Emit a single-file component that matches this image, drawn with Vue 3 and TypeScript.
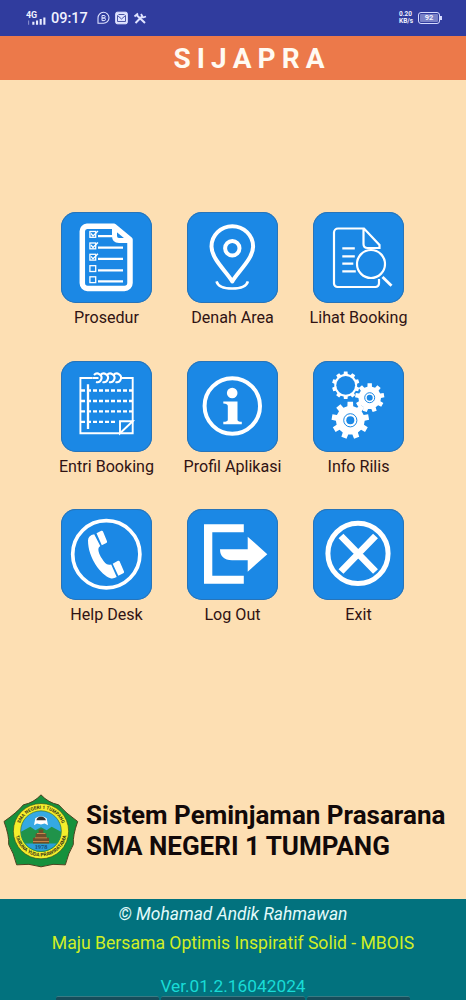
<template>
  <div class="app">
    <div class="status">
      <svg class="status__signal" viewBox="0 0 20 14">
        <text class="status__net" x="0" y="6.5">4G</text>
        <path d="M6 10h2v3H6zM9.5 9h2v4h-2zM13 7.5h2V13h-2zM16.500 6h2v7h-2z" fill="#e9ecff" />
        <path d="M2.500 9v4" stroke="#8c93d0" />
      </svg>
      <span class="status__time">09:17</span>
      <svg class="status__tray" viewBox="0 0 50 14" fill="none" stroke="#dfe3ff">
        <path d="M1 12.300V7a5.500 5.500 0 1 1 5.500 5.300z" stroke-width="1.100" />
        <path d="M5 4.500h2a1.200 1.200 0 0 1 0 2.500H5zM5 7h2.200a1.300 1.300 0 0 1 0 2.600H5z" />
        <rect x="18.700" y="1.200" width="11.600" height="11.600" rx="1.500" fill="#dfe3ff" />
        <path d="M20.500 4.500l4 3.500 4-3.500v6h-8zM21.500 3.500h6" stroke="#4d56a5" />
        <path d="M39.500 4l8.500 8M38.500 12l7-7" stroke-width="2" />
        <path d="M37.500 5.500l3.500-3M44 3l2 3.500 3-1" stroke-width="1.800" />
      </svg>
      <div class="status__speed"><b>0.20</b><b>KB/s</b></div>
      <div class="status__battery"><span>92</span></div>
    </div>

    <header class="header">S I J A P R A</header>

    <main class="main">
      <div class="menu">
        <div v-for="item in menu" :key="item.id" class="menu__item">
          <svg class="menu__icon" viewBox="0 0 91 91" fill="none" stroke="#fff">
            <g v-if="item.id === 'procedure'">
              <path d="M26 14.300H53L69 27.500V71a5.500 5.500 0 0 1-5.500 5.500H26.500A5.500 5.500 0 0 1 21.300 71V19.300a5 5 0 0 1 4.700-5z" stroke-width="5.500" stroke-linejoin="round" />
              <path d="M53.500 14v10q0 4.500 4.500 4.500h11" stroke-width="5" />
              <g v-for="(y, i) in checkRows" :key="y">
                <rect x="28.900" :y="y - 3" width="5.800" height="5.800" stroke-width="1.300" />
                <path v-if="i < 3" :d="`M30 ${y - 1}l2 2.500 5-5`" stroke-width="1.300" />
                <path :d="`M37 ${y + 1.6}H${i ? 62 : 52}`" stroke-width="2.200" />
              </g>
            </g>
            <g v-else-if="item.id === 'map'" stroke-width="4">
              <path d="M45.300 69.500C40 60 24.500 47 24.500 34.500a20.800 20.300 0 0 1 41.600 0C66.100 47 50.500 60 45.300 69.500z" stroke-linejoin="round" />
              <circle cx="45.300" cy="36.300" r="7.200" />
              <path d="M29.500 69.300q2 7.200 15.700 7.200t15.700-7.200" stroke-width="2.500" />
            </g>
            <g v-else-if="item.id === 'list'" stroke-width="2.200">
              <path d="M66 67v4.500a3.500 3.500 0 0 1-3.500 3.500h-38A3.500 3.500 0 0 1 21 71.500v-51a4 4 0 0 1 4-4h26L66.500 33v3H54.500q-4 0-4-4V17" />
              <path d="M29.300 36.300h12.500M29.300 44.300h12.500M29.300 51.700h11M29.300 59.300h13.500" />
              <circle cx="58" cy="52" r="14" />
              <path d="M69.500 65l9 8.800" stroke-width="2.800" />
            </g>
            <g v-else-if="item.id === 'entry'" stroke-width="1.900">
              <path d="M31.500 17H19.400v55.200h52.300V17H60" />
              <path d="M20 29.500h51M20 40h51M20 50.400h51M20 60.800h36" stroke-width="2.300" stroke-dasharray="4 2" />
              <path d="M27 23.300V68" stroke-width="2.300" />
              <path d="M71.700 60.200H59v12zM59 72.200l12.700-12" />
              <path v-for="x in rings" :key="x" :d="`M${x - 3.5} 14a4.300 4.300 0 1 1 2 7`" stroke-width="2.100" />
              <path d="M31.500 17h6" />
            </g>
            <g v-else-if="item.id === 'about'">
              <circle cx="45.300" cy="45" r="27.700" stroke-width="4" />
              <circle cx="45.200" cy="32" r="5.300" fill="#fff" stroke="none" />
              <path d="M36.300 40.500h14.200v18.300q0 2 4.300 2v2.500H36.300v-2.500q4.500 0 4.500-2V45q0-2.500-4.500-2.500z" fill="#fff" stroke="none" />
            </g>
            <g v-else-if="item.id === 'release'" stroke="none">
              <path v-for="(gear, i) in gears" :key="i" :d="gearPath(gear)" fill="#fff" />
              <circle cx="32.700" cy="24.300" r="9.400" fill="#1b88e5" />
              <g fill="none" stroke="#1b88e5" stroke-width="1">
                <circle cx="56.700" cy="36.700" r="5" />
                <circle cx="37.300" cy="59.300" r="6.600" />
              </g>
              <circle cx="56.700" cy="36.700" r="3" fill="#1b88e5" />
              <circle cx="37.300" cy="59.300" r="4" fill="#1b88e5" />
            </g>
            <g v-else-if="item.id === 'help'">
              <circle cx="45.300" cy="45.300" r="33.600" stroke-width="3.700" />
              <path d="M33.200 25.300Q27 26.500 27 31.500C27 49 40 66 49.500 69.300q3 .7 6.200-1.300L50.200 55.500q-4 1-6-1.500C39.500 48.500 37 43 37.400 39.800q.2-1.500 1.900-2.800z" fill="#fff" stroke="none" />
              <path d="M35.500 24.300l4.800-2.500q1.200-.5 1.700.7L46 32.300q.5 1.200-.7 1.700l-4.500 2.200zM51.700 54.800l5.300-3q1.200-.5 1.700.7l4.300 10q.5 1.200-.7 1.700l-5 2.600z" fill="#fff" stroke="none" />
            </g>
            <g v-else-if="item.id === 'logout'" fill="#fff" stroke="none">
              <path d="M17 15.300h39.800v8H25.300v43.500h31.500v7.900H17z" />
              <path d="M33 40.300h27.700V27.700L80.300 45.200 60.700 62.700V51.200H45Q33 51 33 40.300z" />
            </g>
            <g v-else>
              <circle cx="45" cy="44.400" r="30.100" stroke-width="5" />
              <path d="M28 27l34.500 35.500M62.500 27L28 62.500" stroke-width="6.800" />
            </g>
          </svg>
          <span class="menu__label">{{ item.label }}</span>
        </div>
      </div>

      <div class="school">
        <svg class="school__logo" viewBox="9 24 228 222">
          <path d="M123 28Q145 52 176 58Q196 82 233 108Q218 150 220 177Q205 202 196 238Q159 232 123 244Q87 232 50 238Q41 202 26 177Q28 150 12 108Q50 82 70 58Q101 52 123 28z" fill="#16913c" stroke="#4b4420" stroke-width="3" />
          <circle cx="123" cy="137" r="83" fill="#f5ee2c" stroke="#374c1c" stroke-width="2" />
          <circle cx="123" cy="137" r="61" fill="#35a9e3" stroke="#286d31" stroke-width="2" />
          <path d="M63 139l28-15 15 10 17-9 17 9 15-10 28 15a60 60 0 0 1-120 0z" fill="#20934a" />
          <path d="M76 174h94a60 60 0 0 1-94 0z" fill="#2b9ed9" />
          <path d="M102 119l4-21q17-12 34 0l4 21-10-5-11 3-12-3z" fill="#fff" />
          <path d="M109 104q3-11 14-11t15 11z" fill="#33302f" />
          <path d="M116 132h14v12h9v13h8v17H99v-17h8v-13h9z" fill="#704d2c" />
          <path d="M111 144h25M105 157h36M99 168h48" stroke="#c58748" stroke-width="3" />
          <text class="school__year" x="123" y="191" text-anchor="middle">1978</text>
          <path id="ring-top" d="M56 137a67 67 0 1 1 134 0" fill="none" />
          <path id="ring-bottom" d="M45.500 126a78 78 0 1 0 155 0" fill="none" />
          <text class="school__ring school__ring_top" text-anchor="middle"><textPath href="#ring-top" startOffset="50%">SMA NEGERI 1 TUMPANG</textPath></text>
          <text class="school__ring" text-anchor="middle"><textPath href="#ring-bottom" startOffset="50%">TARUNA YUDA PRAWIRATAMA</textPath></text>
        </svg>
        <div class="school__title">
          <div class="school__system">Sistem Peminjaman Prasarana</div>
          <div>SMA NEGERI 1 TUMPANG</div>
        </div>
      </div>
    </main>

    <footer class="footer">
      <div class="footer__author">© Mohamad Andik Rahmawan</div>
      <div class="footer__motto">Maju Bersama Optimis Inspiratif Solid - MBOIS</div>
      <div class="footer__version">Ver.01.2.16042024</div>
      <div class="footer__tabs"><i></i><i></i><i></i></div>
    </footer>
  </div>
</template>

<script setup lang="ts">
interface MenuItem {
  id: string
  label: string
}

interface Gear {
  x: number
  y: number
  outer: number
  inner: number
  teeth: number
}

const menu: MenuItem[] = [
  {id: 'procedure', label: 'Prosedur'},
  {id: 'map', label: 'Denah Area'},
  {id: 'list', label: 'Lihat Booking'},
  {id: 'entry', label: 'Entri Booking'},
  {id: 'about', label: 'Profil Aplikasi'},
  {id: 'release', label: 'Info Rilis'},
  {id: 'help', label: 'Help Desk'},
  {id: 'logout', label: 'Log Out'},
  {id: 'exit', label: 'Exit'},
];

const checkRows = [22.5, 34, 45.3, 56.7, 67.8];
const rings = [36.5, 43, 49.5, 56];

const gears: Gear[] = [
  {x: 32.7, y: 24.3, outer: 13.8, inner: 11.5, teeth: 10},
  {x: 56.7, y: 36.7, outer: 14.7, inner: 11.3, teeth: 9},
  {x: 37.3, y: 59.3, outer: 18.8, inner: 14.4, teeth: 9},
];

const gearPath = (gear: Gear) => {
  const step = Math.PI * 2 / gear.teeth;
  const points: string[] = [];
  for (let i = 0; i < gear.teeth; i++) {
    // base, tip, tip, base of each tooth
    [[-0.29, gear.inner], [-0.21, gear.outer], [0.21, gear.outer], [0.29, gear.inner]].forEach(([shift, r]) => {
      const angle = (i + shift) * step - Math.PI / 2;
      points.push(`${(gear.x + Math.cos(angle) * r).toFixed(2)} ${(gear.y + Math.sin(angle) * r).toFixed(2)}`);
    });
  }
  return `M${points.join('L')}z`;
}
</script>

<style>
body {
  margin: 0;
}
</style>

<style scoped>
.app {
  display: flex;
  flex-direction: column;
  width: 466px;
  height: 1000px;
  overflow: hidden;
  background: #fddfb3;
  font-family: Roboto, "Liberation Sans", sans-serif;
}
.status {
  display: flex;
  align-items: center;
  flex: none;
  box-sizing: border-box;
  height: 36px;
  padding: 0 25px 0 26px;
  background: #303c9e;
  color: #f0f2ff;
}
.status__signal {
  width: 21px;
  height: 15px;
  margin-right: 4px;
}
.status__net {
  font-size: 8.5px;
  font-weight: 700;
  fill: #f0f2ff;
}
.status__time {
  width: 38px;
  font-size: 14.5px;
  font-weight: 500;
}
.status__tray {
  width: 50px;
  height: 14px;
  margin-left: 8px;
}
.status__speed {
  display: flex;
  flex-direction: column;
  width: 14px;
  margin-left: auto;
  margin-right: 5px;
  font-size: 6.5px;
  line-height: 7px;
}
.status__battery {
  position: relative;
  display: flex;
  padding: 1px;
  width: 18px;
  height: 8px;
  margin-right: 1px;
  border: 1px solid #d5daff;
  border-radius: 3px;
}
.status__battery span {
  flex: 1;
  border-radius: 1px;
  background: #7880c6;
  font-size: 7.5px;
  line-height: 8px;
  font-weight: 700;
  text-align: center;
}
.status__battery::after {
  content: "";
  position: absolute;
  right: -3px;
  top: 3px;
  width: 2px;
  height: 4px;
  background: #d5daff;
}
.header {
  flex: none;
  box-sizing: border-box;
  height: 44px;
  padding-left: 32px;
  background: #ec794a;
  color: #fffaf2;
  font-size: 28px;
  font-weight: 700;
  line-height: 46px;
  text-align: center;
  word-spacing: -0.9px;
}
.main {
  display: flex;
  flex-direction: column;
  justify-content: space-between;
  flex: 1;
  box-sizing: border-box;
  padding: 132px 0 31px;
}
.menu {
  display: grid;
  grid-template-columns: repeat(3, 126px);
  grid-auto-rows: 148.5px;
  justify-content: center;
  padding-right: 1px;
}
.menu__item {
  display: flex;
  flex-direction: column;
  align-items: center;
}
.menu__icon {
  width: 91px;
  height: 91px;
  box-sizing: border-box;
  border-radius: 15px;
  background: #1b88e5;
  box-shadow: inset 0 0 0 1px #2874b8;
}
.menu__label {
  margin-top: 5px;
  color: #301313;
  font-size: 16.1px;
  line-height: 20px;
  white-space: nowrap;
}
.school {
  display: flex;
  align-items: center;
  padding-left: 3px;
}
.school__logo {
  width: 76px;
  height: 75px;
}
.school__ring {
  fill: #353617;
  font-size: 15px;
  font-weight: 700;
}
.school__ring_top {
  font-size: 14px;
}
.school__year {
  fill: #174d78;
  font-family: "Liberation Serif", serif;
  font-size: 19px;
  font-weight: 700;
}
.school__title {
  margin-left: 7px;
  color: #120909;
  font-size: 26px;
  font-weight: 700;
  line-height: 31px;
  white-space: nowrap;
}
.footer {
  display: flex;
  flex-direction: column;
  align-items: center;
  flex: none;
  box-sizing: border-box;
  height: 101px;
  padding-top: 5px;
  background: #02727e;
  white-space: nowrap;
}
.footer__author {
  color: #e2fbfb;
  font-size: 17.4px;
  font-style: italic;
  line-height: 20px;
}
.footer__motto {
  margin-top: 9px;
  color: #d0ef25;
  font-size: 17.6px;
  line-height: 20px;
}
.footer__version {
  margin-top: 23px;
  color: #19dbd6;
  font-size: 17.3px;
  line-height: 20px;
}
.footer__tabs {
  display: grid;
  grid-template-columns: 103px 144px 103px;
  gap: 2px;
}
.footer__tabs i {
  height: 4px;
  border-top: 1px solid #397b84;
  border-radius: 2px 2px 0 0;
  background: #164d5b;
}
</style>
